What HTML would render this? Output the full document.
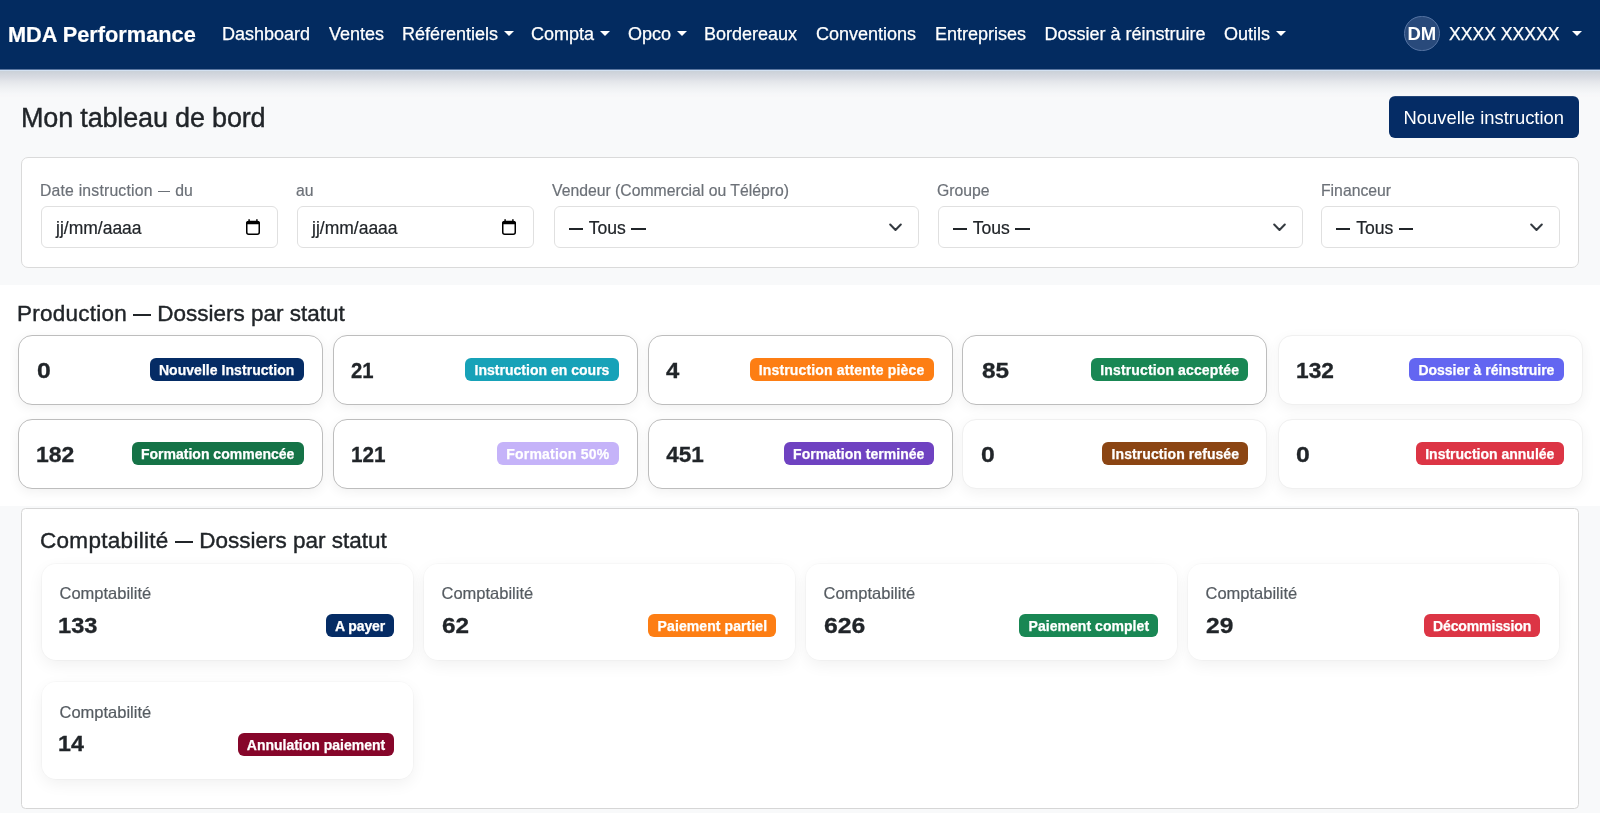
<!DOCTYPE html>
<html lang="fr">
<head>
<meta charset="utf-8">
<title>MDA Performance</title>
<style>
*{box-sizing:border-box;margin:0;padding:0}
html,body{width:1600px;height:813px;overflow:hidden}
body{font-family:"Liberation Sans",sans-serif;background:#f8f9fa;color:#212529;position:relative}
.abs{position:absolute;white-space:nowrap}
/* navbar */
.nav{position:absolute;left:0;top:0;width:1600px;height:69px;background:#032b60;z-index:5}
.nshadow{position:absolute;left:0;top:69px;width:1600px;height:28px;z-index:4;background:linear-gradient(to bottom,#5a76a0 0,#5a76a0 1px,#d3e1f1 1px,#d3e1f1 2px,#c9d1d9 2px,#cdd3da 3px,#d8dbe2 8px,#e5e7eb 13px,#eff1f3 19px,#f5f6f8 24px,rgba(248,249,250,0) 28px)}
.nav .t{position:absolute;color:#fff;font-size:18px;line-height:20px;top:24px;white-space:nowrap}
.brand{position:absolute;left:8px;top:22px;font-size:21.75px;line-height:26px;font-weight:bold;color:#fff;white-space:nowrap}
.caret{display:inline-block;width:0;height:0;border-top:5.8px solid #fff;border-left:5px solid transparent;border-right:5px solid transparent;vertical-align:4.3px;margin-left:5.5px}
.avatar{position:absolute;left:1404px;top:15.8px;width:35.6px;height:35.6px;border-radius:50%;background:#294a7b;border:1.2px solid #5674a3;color:#fff;font-weight:bold;font-size:18.5px;line-height:34px;text-align:center}
/* header */
.h1{position:absolute;left:21px;top:101.5px;font-size:27px;line-height:32px;letter-spacing:-0.17px;color:#212529;white-space:nowrap}
.btn{position:absolute;left:1388.5px;top:96px;width:190.5px;height:42px;background:#052c65;border-radius:6px;color:#fff;font-size:18.4px;line-height:44px;text-align:center;white-space:nowrap}
/* filters */
.fcard{position:absolute;left:21px;top:157px;width:1558px;height:111px;background:#fff;border:1px solid #dadada;border-radius:7px}
.lbl{position:absolute;top:181px;font-size:15.75px;line-height:20px;color:#6c7178;white-space:nowrap}
.inp{position:absolute;top:206px;height:42px;background:#fff;border:1px solid #e0e0e0;border-radius:6px;font-size:18px;line-height:42px;padding-left:14px;color:#212529;white-space:nowrap}
.dash{display:inline-block;width:14.2px;height:2px;background:#212529;vertical-align:3.7px;margin-right:6px}
.dash.d2{margin-left:5.4px;margin-right:0;width:14.6px}
.tous{font-size:17.6px}
.date{font-size:17.5px}
.cal{position:absolute;right:17px;top:12px;width:14px;height:16px}
.chev{position:absolute;right:16px;top:16px;width:13px;height:9px}
/* production */
.band{position:absolute;left:0;top:285px;width:1600px;height:221px;background:#fff}
.h5{position:absolute;font-size:22.5px;line-height:26px;color:#212529;white-space:nowrap}
.pc{position:absolute;width:305px;height:69.5px;background:#fff;border:1px solid #bdbdbd;border-radius:14px;box-shadow:0 3px 12px rgba(0,0,0,.06)}
.pc.nb{border-color:#f0f0f0;box-shadow:0 4px 14px rgba(0,0,0,.055)}
.num{position:absolute;font-size:22.5px;transform-origin:0 50%;font-weight:bold;line-height:26px;color:#212529;white-space:nowrap}
.badge{position:absolute;height:23px;border-radius:6px;color:#fff;font-weight:bold;font-size:14px;line-height:25px;text-align:center;white-space:nowrap}
/* compta */
.ccard{position:absolute;left:21px;top:508px;width:1558px;height:301px;background:#fff;border:1px solid #d6d6d6;border-radius:4.5px}
.cc{position:absolute;width:371px;height:96.5px;background:#fff;border-radius:14px;box-shadow:0 0 0 1px rgba(0,0,0,.025),0 5px 16px rgba(0,0,0,.06)}
.cl{position:absolute;left:18px;top:19.5px;font-size:16.5px;line-height:20px;color:#555b61;white-space:nowrap}
.h1,.h5{-webkit-text-stroke:0.4px #212529}.nav .t{-webkit-text-stroke:0.25px #fff}.lbl,.cl,.inp{-webkit-text-stroke:0.2px currentColor}.tdash{display:inline-block;height:2.2px;background:#212529;vertical-align:5.1px}
.ldash{display:inline-block;width:12.3px;height:1.5px;background:#6c7178;vertical-align:3.6px;margin:0 5.2px 0 5px}
.badge{-webkit-text-stroke:0.25px #fff}.num{-webkit-text-stroke:0.3px #212529}.brand{-webkit-text-stroke:0.2px #fff}</style>
</head>
<body><div style="position:absolute;left:0;top:0;width:1600px;height:813px;will-change:transform">
<div class="nav">
  <div class="brand">MDA Performance</div>
  <div class="t" style="left:222px">Dashboard</div>
  <div class="t" style="left:329px">Ventes</div>
  <div class="t" style="left:402px">Référentiels<span class="caret"></span></div>
  <div class="t" style="left:531px">Compta<span class="caret"></span></div>
  <div class="t" style="left:628px">Opco<span class="caret"></span></div>
  <div class="t" style="left:704px">Bordereaux</div>
  <div class="t" style="left:816px">Conventions</div>
  <div class="t" style="left:935px">Entreprises</div>
  <div class="t" style="left:1044.5px">Dossier à réinstruire</div>
  <div class="t" style="left:1224px">Outils<span class="caret"></span></div>
  <div class="avatar">DM</div>
  <div class="t" style="left:1449px;font-size:17.6px">XXXX XXXXX</div>
  <div class="t" style="left:1572px"><span class="caret" style="margin-left:0;border-top-width:5.5px;border-left-width:5.2px;border-right-width:5.2px"></span></div>
</div>

<div class="nshadow"></div>
<div class="h1">Mon tableau de bord</div>
<div class="btn">Nouvelle instruction</div>

<div class="fcard"></div>
<div class="lbl" style="left:40px"><span style="letter-spacing:0.2px">Date instruction</span><i class="ldash"></i>du</div>
<div class="lbl" style="left:296px">au</div>
<div class="lbl" style="left:552px">Vendeur (Commercial ou Télépro)</div>
<div class="lbl" style="left:937px">Groupe</div>
<div class="lbl" style="left:1321px">Financeur</div>

<div class="inp" style="left:41px;width:237px"><span class="date">jj/mm/aaaa</span><svg class="cal" viewBox="0 0 14 16"><rect x="0.75" y="2.6" width="12.5" height="12.6" rx="2" fill="none" stroke="#000" stroke-width="1.5"/><path d="M0 5.2 V4.4 Q0 1.9 2.4 1.9 H11.6 Q14 1.9 14 4.4 V5.2 Z" fill="#000"/><rect x="2.4" y="0.2" width="1.4" height="2.4" fill="#000"/><rect x="10.2" y="0.2" width="1.4" height="2.4" fill="#000"/></svg></div>
<div class="inp" style="left:297px;width:237.4px"><span class="date">jj/mm/aaaa</span><svg class="cal" viewBox="0 0 14 16"><rect x="0.75" y="2.6" width="12.5" height="12.6" rx="2" fill="none" stroke="#000" stroke-width="1.5"/><path d="M0 5.2 V4.4 Q0 1.9 2.4 1.9 H11.6 Q14 1.9 14 4.4 V5.2 Z" fill="#000"/><rect x="2.4" y="0.2" width="1.4" height="2.4" fill="#000"/><rect x="10.2" y="0.2" width="1.4" height="2.4" fill="#000"/></svg></div>
<div class="inp" style="left:553.5px;width:365.3px"><i class="dash"></i><span class="tous">Tous</span><i class="dash d2"></i><svg class="chev" viewBox="0 0 13 9"><path d="M1.2 1.5 L6.5 7 L11.8 1.5" fill="none" stroke="#343a40" stroke-width="2" stroke-linecap="round" stroke-linejoin="round"/></svg></div>
<div class="inp" style="left:937.5px;width:365.5px"><i class="dash"></i><span class="tous">Tous</span><i class="dash d2"></i><svg class="chev" viewBox="0 0 13 9"><path d="M1.2 1.5 L6.5 7 L11.8 1.5" fill="none" stroke="#343a40" stroke-width="2" stroke-linecap="round" stroke-linejoin="round"/></svg></div>
<div class="inp" style="left:1321px;width:238.5px"><i class="dash"></i><span class="tous">Tous</span><i class="dash d2"></i><svg class="chev" viewBox="0 0 13 9"><path d="M1.2 1.5 L6.5 7 L11.8 1.5" fill="none" stroke="#343a40" stroke-width="2" stroke-linecap="round" stroke-linejoin="round"/></svg></div>

<div class="band"></div>
<div class="h5" style="left:17px;top:301px"><span style="letter-spacing:0.25px">Production</span><i class="tdash" style="margin:0 6.2px 0 5.8px;width:18.2px"></i>Dossiers par statut</div>

<!-- row 1 -->
<div class="pc" style="left:17.6px;top:335px"><div class="num" style="left:18.6px;top:22px;transform:scaleX(1.1)">0</div><div class="badge" style="right:18px;top:22px;background:#052c65;width:153.9px;letter-spacing:0.047px">Nouvelle Instruction</div></div>
<div class="pc" style="left:332.6px;top:335px"><div class="num" style="left:17.6px;top:22px;transform:scaleX(0.9)">21</div><div class="badge" style="right:18px;top:22px;background:#17a2b8;width:153.2px;letter-spacing:0.012px">Instruction en cours</div></div>
<div class="pc" style="left:647.6px;top:335px"><div class="num" style="left:17.6px;top:22px;transform:scaleX(1.06)">4</div><div class="badge" style="right:18px;top:22px;background:#fd7e14;width:184.1px;letter-spacing:0.156px">Instruction attente pièce</div></div>
<div class="pc" style="left:962.3px;top:335px"><div class="num" style="left:18.6px;top:22px;transform:scaleX(1.08)">85</div><div class="badge" style="right:18px;top:22px;background:#198754;width:157.2px;letter-spacing:0.133px">Instruction acceptée</div></div>
<div class="pc nb" style="left:1277.6px;top:335px"><div class="num" style="left:17.3px;top:22px;transform:scaleX(1.01)">132</div><div class="badge" style="right:18px;top:22px;background:#6366f1;width:154.4px;letter-spacing:-0.008px">Dossier à réinstruire</div></div>
<!-- row 2 -->
<div class="pc" style="left:17.6px;top:419px"><div class="num" style="left:17.3px;top:22px;transform:scaleX(1.02)">182</div><div class="badge" style="right:18px;top:22px;background:#157347;width:171.9px;letter-spacing:0.013px">Formation commencée</div></div>
<div class="pc" style="left:332.6px;top:419px"><div class="num" style="left:17.3px;top:22px;transform:scaleX(0.92)">121</div><div class="badge" style="right:18px;top:22px;background:#c5b3f9;width:121.6px;letter-spacing:0.219px">Formation 50%</div></div>
<div class="pc" style="left:647.6px;top:419px"><div class="num" style="left:17.6px;top:22px;transform:scaleX(1.0)">451</div><div class="badge" style="right:18px;top:22px;background:#6f42c1;width:149.7px;letter-spacing:0.034px">Formation terminée</div></div>
<div class="pc nb" style="left:962.3px;top:419px"><div class="num" style="left:17.6px;top:22px;transform:scaleX(1.1)">0</div><div class="badge" style="right:18px;top:22px;background:#8b4513;width:145.9px;letter-spacing:0.078px">Instruction refusée</div></div>
<div class="pc nb" style="left:1277.6px;top:419px"><div class="num" style="left:17.8px;top:22px;transform:scaleX(1.1)">0</div><div class="badge" style="right:18px;top:22px;background:#dc3545;width:147.6px;letter-spacing:0.004px">Instruction annulée</div></div>

<div class="ccard"></div>
<div class="h5" style="left:40px;top:528px"><span style="letter-spacing:0.3px">Comptabilité</span><i class="tdash" style="margin:0 6.2px 0 5.9px;width:18.5px"></i>Dossiers par statut</div>

<div class="cc" style="left:41.5px;top:563.5px"><div class="cl">Comptabilité</div><div class="num" style="left:16.7px;top:49px;transform:scaleX(1.05)">133</div><div class="badge" style="right:18.2px;top:50.5px;background:#052c65;width:68.5px;letter-spacing:-0.106px">A payer</div></div>
<div class="cc" style="left:423.5px;top:563.5px"><div class="cl">Comptabilité</div><div class="num" style="left:18.0px;top:49px;transform:scaleX(1.08)">62</div><div class="badge" style="right:18.2px;top:50.5px;background:#fd7e14;width:127.9px;letter-spacing:0.084px">Paiement partiel</div></div>
<div class="cc" style="left:805.5px;top:563.5px"><div class="cl">Comptabilité</div><div class="num" style="left:18.0px;top:49px;transform:scaleX(1.1)">626</div><div class="badge" style="right:18.2px;top:50.5px;background:#198754;width:139.0px;letter-spacing:0.049px">Paiement complet</div></div>
<div class="cc" style="left:1187.5px;top:563.5px"><div class="cl">Comptabilité</div><div class="num" style="left:18.0px;top:49px;transform:scaleX(1.09)">29</div><div class="badge" style="right:18.2px;top:50.5px;background:#dc3545;width:116.5px;letter-spacing:-0.124px">Décommission</div></div>
<div class="cc" style="left:41.5px;top:682px"><div class="cl">Comptabilité</div><div class="num" style="left:16.5px;top:49px;transform:scaleX(1.03)">14</div><div class="badge" style="right:18.2px;top:50.5px;background:#86062a;width:156.7px;letter-spacing:-0.008px">Annulation paiement</div></div>

</div></body>
</html>
